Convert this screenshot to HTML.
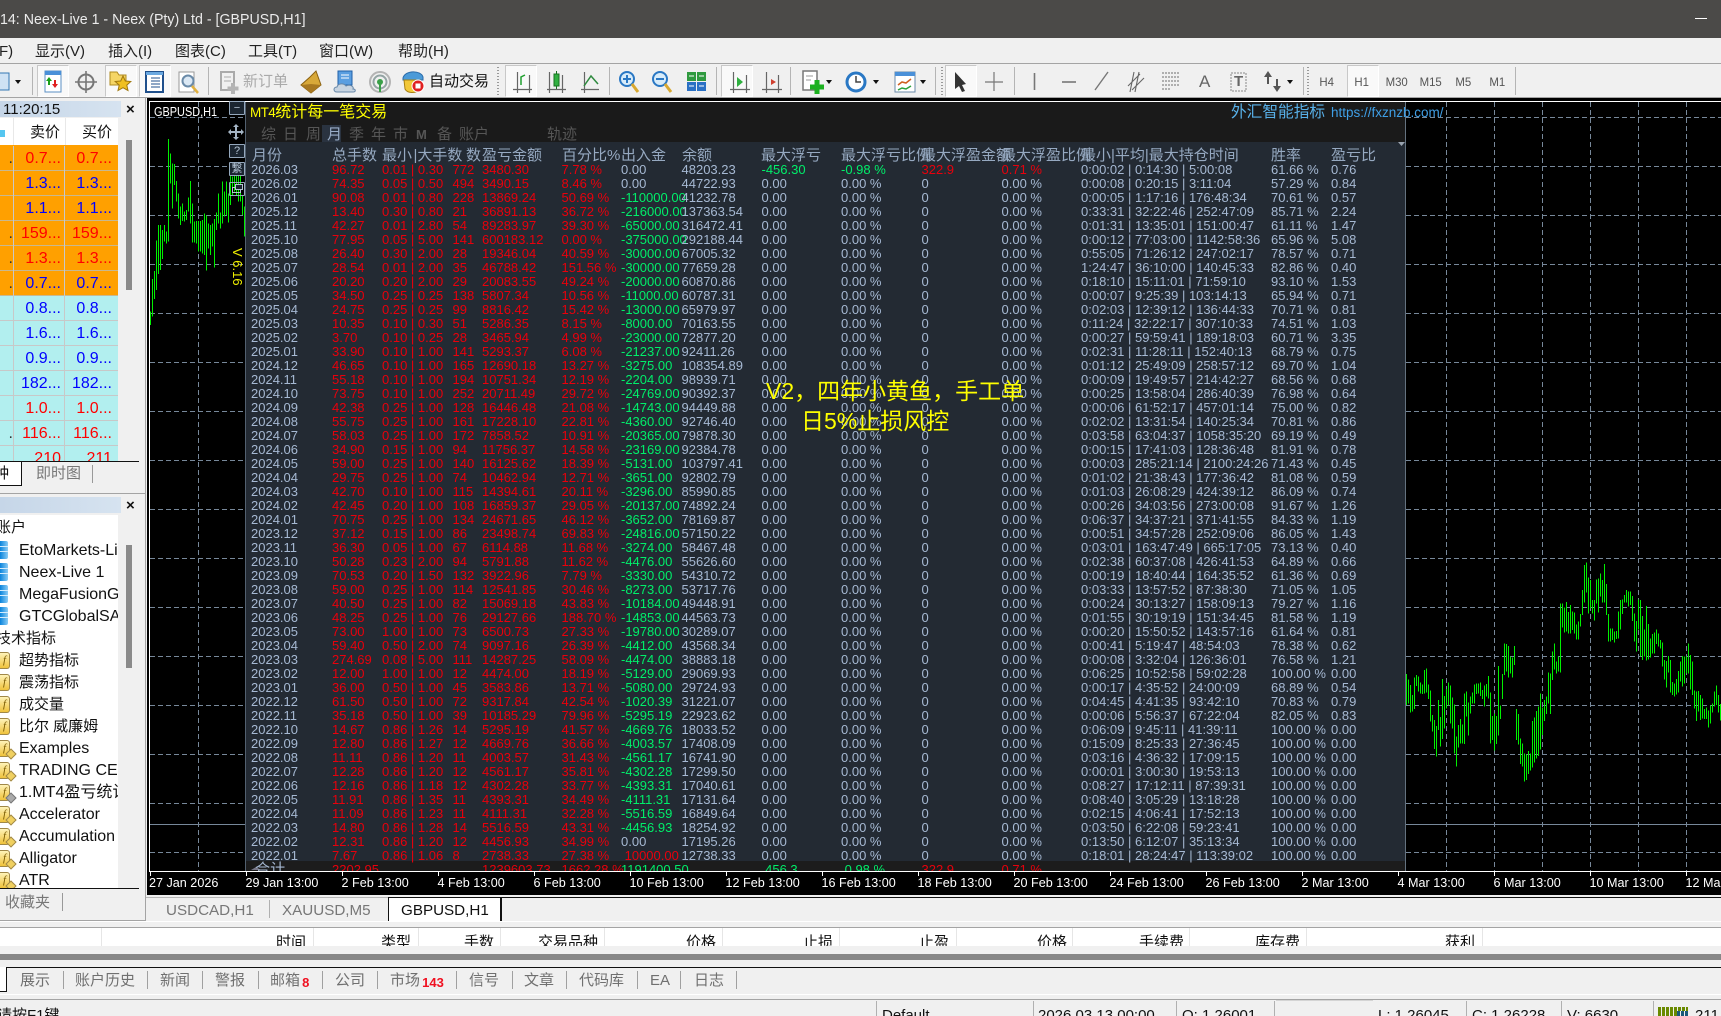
<!DOCTYPE html>
<html><head><meta charset="utf-8"><title>MT4</title>
<style>
html,body{margin:0;padding:0;width:1721px;height:1016px;overflow:hidden;background:#f0f0f0}
body{position:relative;font-family:"Liberation Sans","Noto Sans CJK SC",sans-serif;color:#222}
.a{position:absolute;white-space:nowrap}
svg{position:absolute;left:0;top:0}
#title{left:0;top:0;width:1721px;height:38px;background:#4b4a48}
.m{top:42px;font-size:15px;line-height:20px;color:#222}
.box{position:absolute;background:#f0f0f0}
.tb{top:72px;font-size:15px;line-height:20px}
.tf{top:73px;font-size:12px;line-height:18px;color:#555;transform:scaleX(.95);transform-origin:center}
.row{position:absolute;left:0;width:118px;height:24px}
.row b{position:absolute;top:1px;font-weight:normal;font-size:16px;line-height:24px;text-align:right}
.row b:nth-child(1){left:0;width:13px;color:#333}
.row b:nth-child(2){left:14px;width:47px}
.row b:nth-child(3){left:65px;width:47px}
.r{color:#f00}.u{color:#00f}
.row i{position:absolute;top:0;width:1px;height:25px;background:#c8c8c8}
.n{position:absolute;left:19px;font-size:16px;line-height:22px;height:22px;color:#111;white-space:nowrap;margin-top:1px}
.cn{font-size:15px}
.sv{position:absolute;left:0;width:8px;height:18px;margin-top:-1px;background:linear-gradient(90deg,#0a84dc,#8accf6);border-radius:0 2px 2px 0}
.sv:after{content:"";position:absolute;left:0;top:5px;width:8px;height:1px;background:#d4ecfc;box-shadow:0 5px 0 #d4ecfc}
.fi{position:absolute;left:0;width:9px;height:15px;background:linear-gradient(#fff3b8,#efc23c);border:1px solid #a08848;border-left:0;border-radius:0 3px 3px 0;font:italic 11px/15px "Liberation Serif",serif;color:#7a5a00;text-align:center;overflow:hidden;box-sizing:content-box}
.dm{position:absolute;left:7px;width:6px;height:6px;background:#f0d060;border:1px solid #a08848;transform:rotate(45deg)}
#grid{position:absolute;left:0;top:163px;width:1405px;height:708px;overflow:hidden;font-size:13px;line-height:14px;color:#a6b9d3}
#grid p{position:relative;margin:0;height:14px;width:1405px}
#grid i{position:absolute;top:0;font-style:normal;white-space:nowrap}
#grid i:nth-child(1){left:251px}
#grid i:nth-child(2){left:332px;color:#e8000c}
#grid i:nth-child(3){left:382px;color:#e8000c}
#grid i:nth-child(4){left:452.5px;color:#e8000c}
#grid i:nth-child(5){left:482px;color:#e8000c}
#grid i:nth-child(6){left:561.5px;color:#e8000c}
#grid i:nth-child(7){left:621px;color:#00ee6a}
#grid i:nth-child(8){left:681.5px}
#grid i:nth-child(9){left:761.5px}
#grid i:nth-child(10){left:841px}
#grid i:nth-child(11){left:921.5px}
#grid i:nth-child(12){left:1001.5px}
#grid i:nth-child(13){left:1081px}
#grid i:nth-child(14){left:1271px}
#grid i:nth-child(15){left:1331px}
#grid i.g{color:#00ee6a}
#grid i.d{color:#e8000c}
#grid i.s{color:#a6b9d3}
.h{top:146px;font-size:15px;line-height:20px;color:#96a9c1}
.t2{top:126px;font-size:15px;line-height:18px;color:#565656}
.tl{top:875px;font-size:12.6px;line-height:16px;color:#fff}
.tk{position:absolute;top:872px;width:1px;height:4px;background:#fff}
.ctab{top:897px;font-size:15.2px;line-height:28px;color:#777}
.th{position:absolute;top:5px;font-size:15px;line-height:20px;color:#111;transform:translateX(-100%);white-space:nowrap}
.thb{position:absolute;top:0;width:1px;height:18px;background:#e6e6e6}
.bt{top:971px;font-size:15px;line-height:20px;color:#707070}
.bs{position:absolute;top:971px;width:1px;height:18px;background:#a0a0a0}
.red{color:#f01020;font-weight:bold;font-size:13px}
.st{top:1006px;font-size:15px;line-height:20px;color:#111}
.ss{position:absolute;top:1001px;width:1px;height:15px;background:#b0b0b0}
.sep{position:absolute;top:67px;width:1px;height:28px;background:#b4b4b4}
.pr{position:absolute;top:65px;height:30px;background:#f9f9f9;border:1px solid #c8c8c8;border-right-color:#fff;border-bottom-color:#fff;box-sizing:content-box}
.hd{position:absolute;left:0;height:16px;background:linear-gradient(90deg,#c6d6e8,#d6e3f0);width:121px}
.xx{position:absolute;left:126px;font-size:15px;line-height:16px;color:#111;font-weight:bold}
.ctrl{position:absolute;left:229px;width:14px;height:12px;background:#1b2530;border:1px solid #95a8bd;border-radius:1px;color:#b4c4d4;font-size:11px;line-height:12px;text-align:center}
</style></head><body>
<div class="a" id="title"></div>
<div class="a" style="left:0;top:10px;font-size:15px;line-height:20px;color:#ececec;transform:scaleX(.947);transform-origin:left">14: Neex-Live 1 - Neex (Pty) Ltd - [GBPUSD,H1]</div>
<div class="a" style="left:1695px;top:18px;width:12px;height:1px;background:#fff"></div>
<div class="box" style="left:0;top:38px;width:1721px;height:25px"></div>
<div class="a m" style="left:-1px">F)</div>
<div class="a m" style="left:35px">显示(V)</div>
<div class="a m" style="left:108px">插入(I)</div>
<div class="a m" style="left:175px">图表(C)</div>
<div class="a m" style="left:248px">工具(T)</div>
<div class="a m" style="left:319px">窗口(W)</div>
<div class="a m" style="left:398px">帮助(H)</div>
<div class="a" style="left:0;top:63px;width:1721px;height:1px;background:#a4a4a4"></div>
<div class="a" style="left:0;top:97px;width:1721px;height:1px;background:#a4a4a4"></div>
<div class="pr" style="left:37px;width:30px"></div>
<div class="pr" style="left:105px;width:30px"></div>
<div class="pr" style="left:139px;width:30px"></div>
<div class="pr" style="left:505px;width:30px"></div>
<div class="pr" style="left:721px;width:30px"></div>
<div class="pr" style="left:945px;width:30px"></div>
<div class="pr" style="left:1347px;width:30px"></div>
<div class="sep" style="left:32px"></div><div class="sep" style="left:208px"></div><div class="sep" style="left:609px"></div><div class="sep" style="left:716px"></div><div class="sep" style="left:790px"></div><div class="sep" style="left:935px"></div><div class="sep" style="left:1014px"></div><div class="sep" style="left:1303px"></div><div class="sep" style="left:1515px"></div><div class="sep" style="left:497px;width:2px;background:repeating-linear-gradient(#999 0 1px,transparent 1px 3px)"></div><div class="sep" style="left:941px;width:2px;background:repeating-linear-gradient(#999 0 1px,transparent 1px 3px)"></div><div class="sep" style="left:1307px;width:2px;background:repeating-linear-gradient(#999 0 1px,transparent 1px 3px)"></div>
<div class="a tb" style="left:243px;color:#aaa">新订单</div>
<div class="a tb" style="left:429px;color:#111">自动交易</div>
<div class="a tf" style="left:1319px">H4</div><div class="a tf" style="left:1354px">H1</div><div class="a tf" style="left:1385px">M30</div><div class="a tf" style="left:1419px">M15</div><div class="a tf" style="left:1455px">M5</div><div class="a tf" style="left:1489px">M1</div>
<svg width="1721" height="98" viewBox="0 0 1721 98" fill="none">
<rect x="-6" y="73" width="15" height="17" fill="#cfe2f4" stroke="#3478b4"/><path d="M15 80l6 0-3 4z" fill="#111"/>
<rect x="45" y="71" width="16" height="21" fill="#fff" stroke="#5a8fc4"/><rect x="45" y="71" width="16" height="4" fill="#4a90d8"/><path d="M49 77l-3 4h2v4h2v-4h2z" fill="#1aa01a"/><path d="M55 88l3-4h-2v-4h-2v4h-2z" fill="#e02020"/>
<circle cx="86" cy="82" r="7.5" stroke="#777" stroke-width="2"/><path d="M86 71v22M75 82h22" stroke="#777" stroke-width="1.6"/>
<path d="M110 72h7l2 3h7v10h-16z" fill="#f5d565" stroke="#b08a20"/><path d="M123 76l2.3 5 5.5.5-4 3.6 1.2 5.4-5-2.8-5 2.8 1.2-5.4-4-3.6 5.5-.5z" fill="#f0c020" stroke="#a07810"/>
<rect x="146" y="72" width="17" height="20" fill="#fff" stroke="#20508c" stroke-width="2"/><path d="M146 72h17v3h-17z" fill="#6aa8e0"/><path d="M151 78h9M151 81h9M151 84h9M151 87h9" stroke="#20508c"/>
<rect x="179" y="72" width="15" height="20" fill="#fff" stroke="#999"/><circle cx="188" cy="81" r="5.5" stroke="#6a8aa8" stroke-width="2" fill="#dbe8f4"/><path d="M192 86l6 7" stroke="#e0b040" stroke-width="2.5"/>
<rect x="221" y="72" width="13" height="18" fill="#f0f0f0" stroke="#aaa" stroke-width="2"/><path d="M224 77h7M224 81h7" stroke="#aaa"/><path d="M233 83v11M227.5 88.5h11" stroke="#b4b4b4" stroke-width="4"/>
<path d="M316 71l5 14-10 8-10-8 9-8z" fill="#d8a838" stroke="#8a6010"/><path d="M301 85l10-1 10 1-10 8z" fill="#a87820"/>
<rect x="338" y="71" width="14" height="14" fill="#5a9ee0" stroke="#2060a8"/><path d="M341 75h8M341 78h8" stroke="#fff"/><path d="M337 92c-4 0-4-5 0-5 1-4 7-4 9-1 5-2 8 1 7 3 3 0 3 3 0 3z" fill="#c8d4e0" stroke="#6888a8"/>
<circle cx="380" cy="82" r="10" stroke="#b4b4b4" stroke-width="2"/><circle cx="380" cy="82" r="6.5" stroke="#94a4a4" stroke-width="2"/><circle cx="380" cy="82" r="3" fill="#3aa048"/><path d="M380 82v10" stroke="#3aa048" stroke-width="2"/>
<path d="M403 78c2-8 18-8 20-1v3h-20z" fill="#4a9ad8" stroke="#2a6aa8"/><path d="M404 80h16l-1 10c-4 4-12 3-14-1z" fill="#f2c838" stroke="#a88010"/><circle cx="418" cy="86" r="6" fill="#e02020" stroke="#fff" stroke-width="1"/><rect x="415.5" y="83.5" width="5" height="5" fill="#fff"/>
<g stroke="#666" stroke-width="1.2"><path d="M517.500 72v21M529.500 75v18M513 89.500h19"/><path d="M549.500 72v21M562.500 75v18M547 89.500h19"/><path d="M584.500 72v21M581 89.500h18"/><path d="M733.500 72v21M746.500 75v18M730 89.500h20"/><path d="M766.500 72v21M778.500 75v18M762 89.500h20"/></g>
<path d="M521 85v-8l4-2" stroke="#20a030" stroke-width="1.5"/><rect x="554" y="74" width="5" height="12" fill="#30b040" stroke="#187020"/><path d="M556.5 71v3M556.5 86v3" stroke="#187020"/><path d="M584 86l7-10 7 8" stroke="#2f8a3f" stroke-width="1.5"/>
<circle cx="627" cy="79" r="7" fill="#d8ecfa" stroke="#2a78c4" stroke-width="2"/><path d="M623 79h8M627 75v8" stroke="#2a78c4" stroke-width="2"/><path d="M632 84l6 8" stroke="#d8a830" stroke-width="3"/>
<circle cx="660" cy="79" r="7" fill="#d8ecfa" stroke="#2a78c4" stroke-width="2"/><path d="M656 79h8" stroke="#2a78c4" stroke-width="2"/><path d="M665 84l6 8" stroke="#d8a830" stroke-width="3"/>
<rect x="687" y="72" width="9" height="9" fill="#2f9a3f"/><rect x="697" y="72" width="9" height="9" fill="#2f9a3f"/><rect x="687" y="82" width="9" height="9" fill="#2a70c4"/><rect x="697" y="82" width="9" height="9" fill="#2a70c4"/><path d="M689 76h5M699 76h5M689 86h5M699 86h5" stroke="#fff"/>
<path d="M737 77l6 5-6 5z" fill="#30b040"/><path d="M771 79l5 3-5 3z" fill="#d04030"/>
<rect x="803" y="71" width="14" height="19" fill="#fff" stroke="#777" stroke-width="1.5"/><path d="M806 76h7M806 80h5" stroke="#999"/><path d="M817 80v14M810 87h14" stroke="#1cb020" stroke-width="5"/><path d="M826 80l6 0-3 4z" fill="#111"/>
<circle cx="856" cy="82" r="9" fill="#fff" stroke="#2a78c4" stroke-width="3"/><path d="M856 76v6h5" stroke="#444" stroke-width="1.5"/><path d="M873 80l6 0-3 4z" fill="#111"/>
<rect x="895" y="72" width="20" height="20" fill="#fff" stroke="#6a8aa8"/><rect x="895" y="72" width="20" height="4" fill="#4a90d8"/><path d="M898 85l4-3 4 1 5-4" stroke="#d06020" stroke-width="1.5"/><path d="M898 90l4-2 4 1 5-3" stroke="#2aa03a" stroke-width="1.5"/><path d="M920 80l6 0-3 4z" fill="#111"/>
<path d="M955 72l0 17 4-3 3 6 3-1-3-6 4-1z" fill="#333"/>
<path d="M994 72v19M985 82h18" stroke="#777" stroke-width="1.2"/><path d="M1034.5 73v17" stroke="#777" stroke-width="1.6"/><path d="M1062 82h14" stroke="#777" stroke-width="1.6"/><path d="M1095 90l13-18" stroke="#777" stroke-width="1.4"/>
<path d="M1128 86l12-12M1132 90l12-12M1134 72l-4 20M1139 72l-4 20" stroke="#666" stroke-width="1.1"/>
<path d="M1162 73h17M1162 77h17M1162 81h17M1162 85h17M1162 89h8" stroke="#888" stroke-width="1.2" stroke-dasharray="2 1"/>
<rect x="1231" y="73" width="15" height="18" stroke="#888" stroke-dasharray="2 1"/>
<path d="M1268 71l4 6h-8zM1277 92l4-6h-8z" fill="#555"/><path d="M1268 77v7M1277 79v7" stroke="#555" stroke-width="2"/><path d="M1287 80l6 0-3 4z" fill="#111"/>
</svg>
<div class="a" style="left:1199px;top:71px;font-size:17px;line-height:22px;color:#666">A</div>
<div class="a" style="left:1234px;top:72px;font-size:15px;line-height:20px;color:#666;font-weight:bold">T</div>

<div class="box" style="left:0;top:98px;width:145px;height:822px;border-right:1px solid #a4a4a4;border-bottom:1px solid #a4a4a4"></div>
<div class="hd" style="top:101px"></div>
<div class="a" style="left:3px;top:101px;font-size:15px;line-height:18px;color:#111">11:20:15</div>
<div class="xx" style="top:102px">×</div>
<div class="a" style="left:0;top:118px;width:118px;height:27px;background:#fff"></div>
<div class="a" style="left:13px;top:118px;width:1px;height:27px;background:#e8e8e8"></div><div class="a" style="left:65px;top:118px;width:1px;height:27px;background:#e8e8e8"></div>
<div class="a" style="left:0;top:130px;width:5px;height:7px;background:#55c6f0"></div>
<div class="a" style="left:30px;top:123px;font-size:15px;line-height:20px;color:#111">卖价</div>
<div class="a" style="left:82px;top:123px;font-size:15px;line-height:20px;color:#111">买价</div>
<div id="mw" class="a" style="left:0;top:145px;width:118px;height:316px;overflow:hidden;background:#b2efef">
<div class="a" style="left:0;top:0;width:118px;height:150px;background:#ffa000"></div>
<div class="row" style="top:1px;border-bottom:1px solid #c8b890"><b>.</b><b class="r">0.7...</b><b class="r">0.7...</b><i style="left:13px"></i><i style="left:64px"></i></div>
<div class="row" style="top:26px;border-bottom:1px solid #c8b890"><b></b><b class="u">1.3...</b><b class="u">1.3...</b><i style="left:13px"></i><i style="left:64px"></i></div>
<div class="row" style="top:51px;border-bottom:1px solid #c8b890"><b></b><b class="u">1.1...</b><b class="u">1.1...</b><i style="left:13px"></i><i style="left:64px"></i></div>
<div class="row" style="top:76px;border-bottom:1px solid #c8b890"><b>.</b><b class="r">159...</b><b class="r">159...</b><i style="left:13px"></i><i style="left:64px"></i></div>
<div class="row" style="top:101px;border-bottom:1px solid #c8b890"><b>.</b><b class="r">1.3...</b><b class="r">1.3...</b><i style="left:13px"></i><i style="left:64px"></i></div>
<div class="row" style="top:126px;border-bottom:1px solid #c8b890"><b>.</b><b class="u">0.7...</b><b class="u">0.7...</b><i style="left:13px"></i><i style="left:64px"></i></div>
<div class="row" style="top:151px;border-bottom:1px solid #c8c8c8"><b></b><b class="u">0.8...</b><b class="u">0.8...</b><i style="left:13px"></i><i style="left:64px"></i></div>
<div class="row" style="top:176px;border-bottom:1px solid #c8c8c8"><b></b><b class="u">1.6...</b><b class="u">1.6...</b><i style="left:13px"></i><i style="left:64px"></i></div>
<div class="row" style="top:201px;border-bottom:1px solid #c8c8c8"><b></b><b class="u">0.9...</b><b class="u">0.9...</b><i style="left:13px"></i><i style="left:64px"></i></div>
<div class="row" style="top:226px;border-bottom:1px solid #c8c8c8"><b></b><b class="u">182...</b><b class="u">182...</b><i style="left:13px"></i><i style="left:64px"></i></div>
<div class="row" style="top:251px;border-bottom:1px solid #c8c8c8"><b></b><b class="r">1.0...</b><b class="r">1.0...</b><i style="left:13px"></i><i style="left:64px"></i></div>
<div class="row" style="top:276px;border-bottom:1px solid #c8c8c8"><b>.</b><b class="r">116...</b><b class="r">116...</b><i style="left:13px"></i><i style="left:64px"></i></div>
<div class="row" style="top:301px"><b></b><b class="r">210</b><b class="r">211</b><i style="left:13px"></i><i style="left:64px"></i></div>
</div>
<div class="a" style="left:126px;top:140px;width:6px;height:150px;background:#8a8a8a"></div>
<div class="a" style="left:0;top:461px;width:139px;height:1px;background:#111"></div>
<div class="a" style="left:0;top:461px;width:21px;height:23px;background:#fff;border-right:1px solid #111;border-bottom:1px solid #111;border-top:1px solid #111"></div>
<div class="a" style="left:-6px;top:464px;font-size:15px;line-height:20px;color:#111">种</div>
<div class="a" style="left:36px;top:464px;font-size:15px;line-height:20px;color:#777">即时图</div>
<div class="a" style="left:92px;top:465px;width:1px;height:18px;background:#999"></div>
<div class="a" style="left:0;top:493px;width:145px;height:1px;background:#a4a4a4"></div>
<div class="hd" style="top:497px"></div>
<div class="xx" style="top:498px">×</div>
<div class="a" style="left:0;top:515px;width:118px;height:373px;overflow:hidden;background:#fff" id="nav">
<div class="n cn" style="left:-4px;top:1px">账户</div>
<div class="sv" style="top:27px"></div><div class="n" style="top:24px">EtoMarkets-Live</div>
<div class="sv" style="top:49px"></div><div class="n" style="top:46px">Neex-Live 1</div>
<div class="sv" style="top:71px"></div><div class="n" style="top:68px">MegaFusionGlobal</div>
<div class="sv" style="top:93px"></div><div class="n" style="top:90px">GTCGlobalSA-Live</div>
<div class="n cn" style="left:-4px;top:112px">技术指标</div>
<div class="fi" style="top:137px">f</div><div class="n cn" style="top:134px">超势指标</div>
<div class="fi" style="top:159px">f</div><div class="n cn" style="top:156px">震荡指标</div>
<div class="fi" style="top:181px">f</div><div class="n cn" style="top:178px">成交量</div>
<div class="fi" style="top:203px">f</div><div class="n cn" style="top:200px">比尔 威廉姆</div>
<div class="fi" style="top:225px">f</div><div class="dm" style="top:235px"></div><div class="n" style="top:222px">Examples</div>
<div class="fi" style="top:247px">f</div><div class="dm" style="top:257px"></div><div class="n" style="top:244px">TRADING CENTRAL</div>
<div class="fi" style="top:269px">f</div><div class="dm" style="top:279px;background:#aaa;border-color:#777"></div><div class="n" style="top:266px">1.MT4盈亏统计</div>
<div class="fi" style="top:291px">f</div><div class="dm" style="top:301px"></div><div class="n" style="top:288px">Accelerator</div>
<div class="fi" style="top:313px">f</div><div class="dm" style="top:323px"></div><div class="n" style="top:310px">Accumulation</div>
<div class="fi" style="top:335px">f</div><div class="dm" style="top:345px"></div><div class="n" style="top:332px">Alligator</div>
<div class="fi" style="top:357px">f</div><div class="dm" style="top:367px"></div><div class="n" style="top:354px">ATR</div>
</div>
<div class="a" style="left:126px;top:545px;width:6px;height:123px;background:#8a8a8a"></div>
<div class="a" style="left:0;top:888px;width:139px;height:1px;background:#111"></div>
<div class="a" style="left:5px;top:893px;font-size:15px;line-height:20px;color:#777">收藏夹</div>
<div class="a" style="left:62px;top:893px;width:1px;height:18px;background:#999"></div>

<div class="a" style="left:147px;top:98px;width:1574px;height:797px;background:#000"></div>
<svg width="1721" height="1016" viewBox="0 0 1721 1016" fill="none">
<path d="M150 117.5H1721M150 166.5H1721M150 215.5H1721M150 264.5H1721M150 313.5H1721M150 362.5H1721M150 411.5H1721M150 460.5H1721M150 509.5H1721M150 558.5H1721M150 607.5H1721M150 656.5H1721M150 705.5H1721M150 754.5H1721M150 803.5H1721M150 852.5H1721M198.5 102V871M1446.5 102V871M1494.5 102V871M1542.5 102V871M1590.5 102V871M1638.5 102V871M1686.5 102V871" stroke="#77889a" stroke-dasharray="5 3"/>
<path d="M150 824.5H1721" stroke="#77889a"/>
<g transform="translate(0.17,95) scale(.33333)" stroke="#00f000" stroke-width="3" shape-rendering="crispEdges">
<path d="M451 650V690M457 552V665M463 528V612M469 437V585M475 390V537M481 390V525M487 405V492M493 390V440M499 410V445M505 132V440M511 175V265M517 205V340M523 207V270M529 258V320M535 295V370M541 335V390M547 325V378M553 350V380M559 345V375M565 308V350M571 258V385M577 325V442M583 380V442M589 378V445M595 378V470M601 378V470M607 375V475M613 355V480M619 362V527M625 385V460M631 390V480M637 385V455M643 372V518M649 352V405M655 295V385M661 352V400M667 260V385M673 290V365M679 260V360M685 295V382M691 240V330M697 245V300M703 240V290M709 240V300M715 240V320M721 240V320M727 300V360M733 335V425"/>
</g>
<g transform="translate(1400.17,540) scale(.33333)" stroke="#00f000" stroke-width="3" shape-rendering="crispEdges">
<path d="M19 402V495M25 418V490M31 435V518M37 465V515M43 413V507M49 405V438M55 410V455M61 427V460M67 433V462M73 390V460M79 385V458M85 433V477M91 452V545M97 525V575M103 540V627M109 558V650M115 480V570M121 531V620M127 417V597M133 468V565M139 447V505M145 427V497M151 437V550M157 472V565M163 493V640M169 590V680M175 555V623M181 537V610M187 553V610M193 460V612M199 454V530M205 487V587M211 470V520M217 457V490M223 433V490M229 431V462M235 430V460M241 428V468M247 450V477M253 437V500M259 432V470M265 408V475M271 457V610M277 528V600M283 520V632M289 528V612M295 378V587M301 497V537M307 402V477M313 310V405M319 312V395M325 318V412M331 350V400M337 352V413M343 318V375M349 507V600M355 522V613M361 595V672M367 610V680M373 640V725M379 643V720M385 633V702M391 640V692M397 543V683M403 533V668M409 513V655M415 500V648M421 460V628M427 502V585M433 480V543M439 470V522M445 397V490M451 400V522M457 335V420M463 310V388M469 365V400M475 350V395M481 190V398M487 190V263M493 203V277M499 186V275M505 216V280M511 195V280M517 215V270M523 218V280M529 253V298M535 245V298M541 222V260M547 150V225M553 75V188M559 67V158M565 113V220M571 120V205M577 180V220M583 180V242M589 118V190M595 115V218M601 100V170M607 120V188M613 72V188M619 132V225M625 222V305M631 265V305M637 265V300M643 275V308M649 273V297M655 215V295M661 180V268M667 178V222M673 165V187M679 150V187M685 155V200M691 155V195M697 168V243M703 220V305M709 243V335M715 178V268M721 180V350M727 228V360M733 268V350M739 198V362M745 252V358M751 295V352M757 282V340M763 278V340M769 268V312M775 280V320M781 300V325M787 308V380M793 360V418M799 363V443M805 348V398M811 360V458M817 426V465M823 430V470M829 417V463M835 393V458M841 365V425M847 348V440M853 350V430M859 350V400M865 310V400M871 345V448M877 365V465M883 452V505M889 455V543M895 453V515M901 465V540M907 475V535M913 507V537M919 502V537M925 512V563M931 497V550M937 490V517M943 455V500M949 437V495M955 465V517M961 492V542"/>
</g>
<path d="M149.5 101V872M149 101.5H1721M149 871.5H1721" stroke="#fff"/>
</svg>
<div class="tk" style="left:150px"></div><div class="tk" style="left:246px"></div><div class="tk" style="left:342px"></div><div class="tk" style="left:438px"></div><div class="tk" style="left:534px"></div><div class="tk" style="left:630px"></div><div class="tk" style="left:726px"></div><div class="tk" style="left:822px"></div><div class="tk" style="left:918px"></div><div class="tk" style="left:1014px"></div><div class="tk" style="left:1110px"></div><div class="tk" style="left:1206px"></div><div class="tk" style="left:1302px"></div><div class="tk" style="left:1398px"></div><div class="tk" style="left:1494px"></div><div class="tk" style="left:1590px"></div><div class="tk" style="left:1686px"></div>
<div class="a tl" style="left:149px">27 Jan 2026</div><div class="a tl" style="left:245.5px">29 Jan 13:00</div><div class="a tl" style="left:341.5px">2 Feb 13:00</div><div class="a tl" style="left:437.5px">4 Feb 13:00</div><div class="a tl" style="left:533.5px">6 Feb 13:00</div><div class="a tl" style="left:629.5px">10 Feb 13:00</div><div class="a tl" style="left:725.5px">12 Feb 13:00</div><div class="a tl" style="left:821.5px">16 Feb 13:00</div><div class="a tl" style="left:917.5px">18 Feb 13:00</div><div class="a tl" style="left:1013.5px">20 Feb 13:00</div><div class="a tl" style="left:1109.5px">24 Feb 13:00</div><div class="a tl" style="left:1205.5px">26 Feb 13:00</div><div class="a tl" style="left:1301.5px">2 Mar 13:00</div><div class="a tl" style="left:1397.5px">4 Mar 13:00</div><div class="a tl" style="left:1493.5px">6 Mar 13:00</div><div class="a tl" style="left:1589.5px">10 Mar 13:00</div><div class="a tl" style="left:1685.5px">12 Mar 13:00</div>
<div class="a" style="left:154px;top:103px;font-size:13px;line-height:18px;color:#fff;transform:scaleX(.84);transform-origin:left">GBPUSD,H1</div>
<div class="a" style="left:244px;top:248px;font-size:13px;line-height:14px;color:#f0f000;transform:rotate(90deg);transform-origin:0 0">V 6.16</div>

<div class="a" style="left:245px;top:102px;width:1160px;height:40px;background:#1a1a1a"></div>
<div class="a" style="left:245px;top:142px;width:1160px;height:719px;background:#232a33"></div>
<div class="a" style="left:245px;top:861px;width:1160px;height:10px;background:#1c1c1c"></div>
<div class="a" style="left:245px;top:102px;width:1px;height:769px;background:#52606f"></div>
<div class="a" style="left:1405px;top:102px;width:1px;height:769px;background:#64727f"></div>
<div class="a" style="left:250px;top:103px;font-size:16px;line-height:20px;color:#ff0"><span style="font-size:13.5px;letter-spacing:-.6px">MT4</span>统计每一笔交易</div>
<div class="a" style="left:1231px;top:103px;font-size:15.7px;line-height:20px;color:#58b0e8">外汇智能指标</div>
<div class="a" style="left:1331px;top:103px;font-size:13.5px;line-height:20px;color:#3f9fe6">https://fxznzb.com/</div>
<div class="a" style="left:322px;top:125px;width:19px;height:17px;background:#2a3340"></div>
<div class="a t2" style="left:261px">综</div><div class="a t2" style="left:283px">日</div><div class="a t2" style="left:306px">周</div><div class="a t2" style="left:327px;color:#9aaec8">月</div><div class="a t2" style="left:349px">季</div><div class="a t2" style="left:371px">年</div><div class="a t2" style="left:393px">巿</div><div class="a t2" style="left:416px;font-weight:bold;font-size:13px">M</div><div class="a t2" style="left:437px">备</div><div class="a t2" style="left:459px">账户</div><div class="a t2" style="left:547px">轨迹</div>
<div class="a h" style="left:252px">月份</div><div class="a h" style="left:332px">总手数</div><div class="a h" style="left:382px">最小<span style="margin-left:1.5px">|</span>大手数</div><div class="a h" style="left:466px">数</div><div class="a h" style="left:482px">盈亏金额</div><div class="a h" style="left:562px">百分比%</div><div class="a h" style="left:621px">出入金</div><div class="a h" style="left:682px">余额</div><div class="a h" style="left:761px">最大浮亏</div><div class="a h" style="left:841px">最大浮亏比例</div><div class="a h" style="left:921px">最大浮盈金额</div><div class="a h" style="left:1001px">最大浮盈比例</div><div class="a h" style="left:1081px">最小|平均|最大持仓时间</div><div class="a h" style="left:1271px">胜率</div><div class="a h" style="left:1331px">盈亏比</div>
<svg width="1721" height="1016" viewBox="0 0 1721 1016"><path d="M1398 142h7l-3.5 4z" fill="#9aa4b0"/><path d="M251 870l5-3 5 3z" fill="#778"/></svg>
<div id="grid">
<p><i>2026.03</i><i>96.72</i><i>0.01 | 0.30</i><i>772</i><i>3480.30</i><i>7.78 %</i><i class="s">0.00</i><i>48203.23</i><i class="g">-456.30</i><i class="g">-0.98 %</i><i class="d">322.9</i><i class="d">0.71 %</i><i>0:00:02 | 0:14:30 | 5:00:08</i><i>61.66 %</i><i>0.76</i></p>
<p><i>2026.02</i><i>74.35</i><i>0.05 | 0.50</i><i>494</i><i>3490.15</i><i>8.46 %</i><i class="s">0.00</i><i>44722.93</i><i>0.00</i><i>0.00 %</i><i>0</i><i>0.00 %</i><i>0:00:08 | 0:20:15 | 3:11:04</i><i>57.29 %</i><i>0.84</i></p>
<p><i>2026.01</i><i>90.08</i><i>0.01 | 0.80</i><i>228</i><i>13869.24</i><i>50.69 %</i><i>-110000.00</i><i>41232.78</i><i>0.00</i><i>0.00 %</i><i>0</i><i>0.00 %</i><i>0:00:05 | 1:17:16 | 176:48:34</i><i>70.61 %</i><i>0.57</i></p>
<p><i>2025.12</i><i>13.40</i><i>0.30 | 0.80</i><i>21</i><i>36891.13</i><i>36.72 %</i><i>-216000.00</i><i>137363.54</i><i>0.00</i><i>0.00 %</i><i>0</i><i>0.00 %</i><i>0:33:31 | 32:22:46 | 252:47:09</i><i>85.71 %</i><i>2.24</i></p>
<p><i>2025.11</i><i>42.27</i><i>0.01 | 2.80</i><i>54</i><i>89283.97</i><i>39.30 %</i><i>-65000.00</i><i>316472.41</i><i>0.00</i><i>0.00 %</i><i>0</i><i>0.00 %</i><i>0:01:31 | 13:35:01 | 151:00:47</i><i>61.11 %</i><i>1.47</i></p>
<p><i>2025.10</i><i>77.95</i><i>0.05 | 5.00</i><i>141</i><i>600183.12</i><i>0.00 %</i><i>-375000.00</i><i>292188.44</i><i>0.00</i><i>0.00 %</i><i>0</i><i>0.00 %</i><i>0:00:12 | 77:03:00 | 1142:58:36</i><i>65.96 %</i><i>5.08</i></p>
<p><i>2025.08</i><i>26.40</i><i>0.30 | 2.00</i><i>28</i><i>19346.04</i><i>40.59 %</i><i>-30000.00</i><i>67005.32</i><i>0.00</i><i>0.00 %</i><i>0</i><i>0.00 %</i><i>0:55:05 | 71:26:12 | 247:02:17</i><i>78.57 %</i><i>0.71</i></p>
<p><i>2025.07</i><i>28.54</i><i>0.01 | 2.00</i><i>35</i><i>46788.42</i><i>151.56 %</i><i>-30000.00</i><i>77659.28</i><i>0.00</i><i>0.00 %</i><i>0</i><i>0.00 %</i><i>1:24:47 | 36:10:00 | 140:45:33</i><i>82.86 %</i><i>0.40</i></p>
<p><i>2025.06</i><i>20.20</i><i>0.20 | 2.00</i><i>29</i><i>20083.55</i><i>49.24 %</i><i>-20000.00</i><i>60870.86</i><i>0.00</i><i>0.00 %</i><i>0</i><i>0.00 %</i><i>0:18:10 | 15:11:01 | 71:59:10</i><i>93.10 %</i><i>1.53</i></p>
<p><i>2025.05</i><i>34.50</i><i>0.25 | 0.25</i><i>138</i><i>5807.34</i><i>10.56 %</i><i>-11000.00</i><i>60787.31</i><i>0.00</i><i>0.00 %</i><i>0</i><i>0.00 %</i><i>0:00:07 | 9:25:39 | 103:14:13</i><i>65.94 %</i><i>0.71</i></p>
<p><i>2025.04</i><i>24.75</i><i>0.25 | 0.25</i><i>99</i><i>8816.42</i><i>15.42 %</i><i>-13000.00</i><i>65979.97</i><i>0.00</i><i>0.00 %</i><i>0</i><i>0.00 %</i><i>0:02:03 | 12:39:12 | 136:44:33</i><i>70.71 %</i><i>0.81</i></p>
<p><i>2025.03</i><i>10.35</i><i>0.10 | 0.30</i><i>51</i><i>5286.35</i><i>8.15 %</i><i>-8000.00</i><i>70163.55</i><i>0.00</i><i>0.00 %</i><i>0</i><i>0.00 %</i><i>0:11:24 | 32:22:17 | 307:10:33</i><i>74.51 %</i><i>1.03</i></p>
<p><i>2025.02</i><i>3.70</i><i>0.10 | 0.25</i><i>28</i><i>3465.94</i><i>4.99 %</i><i>-23000.00</i><i>72877.20</i><i>0.00</i><i>0.00 %</i><i>0</i><i>0.00 %</i><i>0:00:27 | 59:59:41 | 189:18:03</i><i>60.71 %</i><i>3.35</i></p>
<p><i>2025.01</i><i>33.90</i><i>0.10 | 1.00</i><i>141</i><i>5293.37</i><i>6.08 %</i><i>-21237.00</i><i>92411.26</i><i>0.00</i><i>0.00 %</i><i>0</i><i>0.00 %</i><i>0:02:31 | 11:28:11 | 152:40:13</i><i>68.79 %</i><i>0.75</i></p>
<p><i>2024.12</i><i>46.65</i><i>0.10 | 1.00</i><i>165</i><i>12690.18</i><i>13.27 %</i><i>-3275.00</i><i>108354.89</i><i>0.00</i><i>0.00 %</i><i>0</i><i>0.00 %</i><i>0:01:12 | 25:49:09 | 258:57:12</i><i>69.70 %</i><i>1.04</i></p>
<p><i>2024.11</i><i>55.18</i><i>0.10 | 1.00</i><i>194</i><i>10751.34</i><i>12.19 %</i><i>-2204.00</i><i>98939.71</i><i>0.00</i><i>0.00 %</i><i>0</i><i>0.00 %</i><i>0:00:09 | 19:49:57 | 214:42:27</i><i>68.56 %</i><i>0.68</i></p>
<p><i>2024.10</i><i>73.75</i><i>0.10 | 1.00</i><i>252</i><i>20711.49</i><i>29.72 %</i><i>-24769.00</i><i>90392.37</i><i>0.00</i><i>0.00 %</i><i>0</i><i>0.00 %</i><i>0:00:25 | 13:58:04 | 286:40:39</i><i>76.98 %</i><i>0.64</i></p>
<p><i>2024.09</i><i>42.38</i><i>0.25 | 1.00</i><i>128</i><i>16446.48</i><i>21.08 %</i><i>-14743.00</i><i>94449.88</i><i>0.00</i><i>0.00 %</i><i>0</i><i>0.00 %</i><i>0:00:06 | 61:52:17 | 457:01:14</i><i>75.00 %</i><i>0.82</i></p>
<p><i>2024.08</i><i>55.75</i><i>0.25 | 1.00</i><i>161</i><i>17228.10</i><i>22.81 %</i><i>-4360.00</i><i>92746.40</i><i>0.00</i><i>0.00 %</i><i>0</i><i>0.00 %</i><i>0:02:02 | 13:31:54 | 140:25:34</i><i>70.81 %</i><i>0.86</i></p>
<p><i>2024.07</i><i>58.03</i><i>0.25 | 1.00</i><i>172</i><i>7858.52</i><i>10.91 %</i><i>-20365.00</i><i>79878.30</i><i>0.00</i><i>0.00 %</i><i>0</i><i>0.00 %</i><i>0:03:58 | 63:04:37 | 1058:35:20</i><i>69.19 %</i><i>0.49</i></p>
<p><i>2024.06</i><i>34.90</i><i>0.15 | 1.00</i><i>94</i><i>11756.37</i><i>14.58 %</i><i>-23169.00</i><i>92384.78</i><i>0.00</i><i>0.00 %</i><i>0</i><i>0.00 %</i><i>0:00:15 | 17:41:03 | 128:36:48</i><i>81.91 %</i><i>0.78</i></p>
<p><i>2024.05</i><i>59.00</i><i>0.25 | 1.00</i><i>140</i><i>16125.62</i><i>18.39 %</i><i>-5131.00</i><i>103797.41</i><i>0.00</i><i>0.00 %</i><i>0</i><i>0.00 %</i><i>0:00:03 | 285:21:14 | 2100:24:26</i><i>71.43 %</i><i>0.45</i></p>
<p><i>2024.04</i><i>29.75</i><i>0.25 | 1.00</i><i>74</i><i>10462.94</i><i>12.71 %</i><i>-3651.00</i><i>92802.79</i><i>0.00</i><i>0.00 %</i><i>0</i><i>0.00 %</i><i>0:01:02 | 21:38:43 | 177:36:42</i><i>81.08 %</i><i>0.59</i></p>
<p><i>2024.03</i><i>42.70</i><i>0.10 | 1.00</i><i>115</i><i>14394.61</i><i>20.11 %</i><i>-3296.00</i><i>85990.85</i><i>0.00</i><i>0.00 %</i><i>0</i><i>0.00 %</i><i>0:01:03 | 26:08:29 | 424:39:12</i><i>86.09 %</i><i>0.74</i></p>
<p><i>2024.02</i><i>42.45</i><i>0.20 | 1.00</i><i>108</i><i>16859.37</i><i>29.05 %</i><i>-20137.00</i><i>74892.24</i><i>0.00</i><i>0.00 %</i><i>0</i><i>0.00 %</i><i>0:00:26 | 34:03:56 | 273:00:08</i><i>91.67 %</i><i>1.26</i></p>
<p><i>2024.01</i><i>70.75</i><i>0.25 | 1.00</i><i>134</i><i>24671.65</i><i>46.12 %</i><i>-3652.00</i><i>78169.87</i><i>0.00</i><i>0.00 %</i><i>0</i><i>0.00 %</i><i>0:06:37 | 34:37:21 | 371:41:55</i><i>84.33 %</i><i>1.19</i></p>
<p><i>2023.12</i><i>37.12</i><i>0.15 | 1.00</i><i>86</i><i>23498.74</i><i>69.83 %</i><i>-24816.00</i><i>57150.22</i><i>0.00</i><i>0.00 %</i><i>0</i><i>0.00 %</i><i>0:00:51 | 34:57:28 | 252:09:06</i><i>86.05 %</i><i>1.43</i></p>
<p><i>2023.11</i><i>36.30</i><i>0.05 | 1.00</i><i>67</i><i>6114.88</i><i>11.68 %</i><i>-3274.00</i><i>58467.48</i><i>0.00</i><i>0.00 %</i><i>0</i><i>0.00 %</i><i>0:03:01 | 163:47:49 | 665:17:05</i><i>73.13 %</i><i>0.40</i></p>
<p><i>2023.10</i><i>50.28</i><i>0.23 | 2.00</i><i>94</i><i>5791.88</i><i>11.62 %</i><i>-4476.00</i><i>55626.60</i><i>0.00</i><i>0.00 %</i><i>0</i><i>0.00 %</i><i>0:02:38 | 60:37:08 | 426:41:53</i><i>64.89 %</i><i>0.66</i></p>
<p><i>2023.09</i><i>70.53</i><i>0.20 | 1.50</i><i>132</i><i>3922.96</i><i>7.79 %</i><i>-3330.00</i><i>54310.72</i><i>0.00</i><i>0.00 %</i><i>0</i><i>0.00 %</i><i>0:00:19 | 18:40:44 | 164:35:52</i><i>61.36 %</i><i>0.69</i></p>
<p><i>2023.08</i><i>59.00</i><i>0.25 | 1.00</i><i>114</i><i>12541.85</i><i>30.46 %</i><i>-8273.00</i><i>53717.76</i><i>0.00</i><i>0.00 %</i><i>0</i><i>0.00 %</i><i>0:03:33 | 13:57:52 | 87:38:30</i><i>71.05 %</i><i>1.05</i></p>
<p><i>2023.07</i><i>40.50</i><i>0.25 | 1.00</i><i>82</i><i>15069.18</i><i>43.83 %</i><i>-10184.00</i><i>49448.91</i><i>0.00</i><i>0.00 %</i><i>0</i><i>0.00 %</i><i>0:00:24 | 30:13:27 | 158:09:13</i><i>79.27 %</i><i>1.16</i></p>
<p><i>2023.06</i><i>48.25</i><i>0.25 | 1.00</i><i>76</i><i>29127.66</i><i>188.70 %</i><i>-14853.00</i><i>44563.73</i><i>0.00</i><i>0.00 %</i><i>0</i><i>0.00 %</i><i>0:01:55 | 30:19:19 | 151:34:45</i><i>81.58 %</i><i>1.19</i></p>
<p><i>2023.05</i><i>73.00</i><i>1.00 | 1.00</i><i>73</i><i>6500.73</i><i>27.33 %</i><i>-19780.00</i><i>30289.07</i><i>0.00</i><i>0.00 %</i><i>0</i><i>0.00 %</i><i>0:00:20 | 15:50:52 | 143:57:16</i><i>61.64 %</i><i>0.81</i></p>
<p><i>2023.04</i><i>59.40</i><i>0.50 | 2.00</i><i>74</i><i>9097.16</i><i>26.39 %</i><i>-4412.00</i><i>43568.34</i><i>0.00</i><i>0.00 %</i><i>0</i><i>0.00 %</i><i>0:00:41 | 5:19:47 | 48:54:03</i><i>78.38 %</i><i>0.62</i></p>
<p><i>2023.03</i><i>274.69</i><i>0.08 | 5.00</i><i>111</i><i>14287.25</i><i>58.09 %</i><i>-4474.00</i><i>38883.18</i><i>0.00</i><i>0.00 %</i><i>0</i><i>0.00 %</i><i>0:00:08 | 3:32:04 | 126:36:01</i><i>76.58 %</i><i>1.21</i></p>
<p><i>2023.02</i><i>12.00</i><i>1.00 | 1.00</i><i>12</i><i>4474.00</i><i>18.19 %</i><i>-5129.00</i><i>29069.93</i><i>0.00</i><i>0.00 %</i><i>0</i><i>0.00 %</i><i>0:06:25 | 10:52:58 | 59:02:28</i><i>100.00 %</i><i>0.00</i></p>
<p><i>2023.01</i><i>36.00</i><i>0.50 | 1.00</i><i>45</i><i>3583.86</i><i>13.71 %</i><i>-5080.00</i><i>29724.93</i><i>0.00</i><i>0.00 %</i><i>0</i><i>0.00 %</i><i>0:00:17 | 4:35:52 | 24:00:09</i><i>68.89 %</i><i>0.54</i></p>
<p><i>2022.12</i><i>61.50</i><i>0.50 | 1.00</i><i>72</i><i>9317.84</i><i>42.54 %</i><i>-1020.39</i><i>31221.07</i><i>0.00</i><i>0.00 %</i><i>0</i><i>0.00 %</i><i>0:04:45 | 4:41:35 | 93:42:10</i><i>70.83 %</i><i>0.79</i></p>
<p><i>2022.11</i><i>35.18</i><i>0.50 | 1.00</i><i>39</i><i>10185.29</i><i>79.96 %</i><i>-5295.19</i><i>22923.62</i><i>0.00</i><i>0.00 %</i><i>0</i><i>0.00 %</i><i>0:00:06 | 5:56:37 | 67:22:04</i><i>82.05 %</i><i>0.83</i></p>
<p><i>2022.10</i><i>14.67</i><i>0.86 | 1.26</i><i>14</i><i>5295.19</i><i>41.57 %</i><i>-4669.76</i><i>18033.52</i><i>0.00</i><i>0.00 %</i><i>0</i><i>0.00 %</i><i>0:06:09 | 9:45:11 | 41:39:11</i><i>100.00 %</i><i>0.00</i></p>
<p><i>2022.09</i><i>12.80</i><i>0.86 | 1.27</i><i>12</i><i>4669.76</i><i>36.66 %</i><i>-4003.57</i><i>17408.09</i><i>0.00</i><i>0.00 %</i><i>0</i><i>0.00 %</i><i>0:15:09 | 8:25:33 | 27:36:45</i><i>100.00 %</i><i>0.00</i></p>
<p><i>2022.08</i><i>11.11</i><i>0.86 | 1.20</i><i>11</i><i>4003.57</i><i>31.43 %</i><i>-4561.17</i><i>16741.90</i><i>0.00</i><i>0.00 %</i><i>0</i><i>0.00 %</i><i>0:03:16 | 4:36:32 | 17:09:15</i><i>100.00 %</i><i>0.00</i></p>
<p><i>2022.07</i><i>12.28</i><i>0.86 | 1.20</i><i>12</i><i>4561.17</i><i>35.81 %</i><i>-4302.28</i><i>17299.50</i><i>0.00</i><i>0.00 %</i><i>0</i><i>0.00 %</i><i>0:00:01 | 3:00:30 | 19:53:13</i><i>100.00 %</i><i>0.00</i></p>
<p><i>2022.06</i><i>12.16</i><i>0.86 | 1.18</i><i>12</i><i>4302.28</i><i>33.77 %</i><i>-4393.31</i><i>17040.61</i><i>0.00</i><i>0.00 %</i><i>0</i><i>0.00 %</i><i>0:08:27 | 17:12:11 | 87:39:31</i><i>100.00 %</i><i>0.00</i></p>
<p><i>2022.05</i><i>11.91</i><i>0.86 | 1.35</i><i>11</i><i>4393.31</i><i>34.49 %</i><i>-4111.31</i><i>17131.64</i><i>0.00</i><i>0.00 %</i><i>0</i><i>0.00 %</i><i>0:08:40 | 3:05:29 | 13:18:28</i><i>100.00 %</i><i>0.00</i></p>
<p><i>2022.04</i><i>11.09</i><i>0.86 | 1.23</i><i>11</i><i>4111.31</i><i>32.28 %</i><i>-5516.59</i><i>16849.64</i><i>0.00</i><i>0.00 %</i><i>0</i><i>0.00 %</i><i>0:02:15 | 4:06:41 | 17:52:13</i><i>100.00 %</i><i>0.00</i></p>
<p><i>2022.03</i><i>14.80</i><i>0.86 | 1.28</i><i>14</i><i>5516.59</i><i>43.31 %</i><i>-4456.93</i><i>18254.92</i><i>0.00</i><i>0.00 %</i><i>0</i><i>0.00 %</i><i>0:03:50 | 6:22:08 | 59:23:41</i><i>100.00 %</i><i>0.00</i></p>
<p><i>2022.02</i><i>12.31</i><i>0.86 | 1.20</i><i>12</i><i>4456.93</i><i>34.99 %</i><i class="s">0.00</i><i>17195.26</i><i>0.00</i><i>0.00 %</i><i>0</i><i>0.00 %</i><i>0:13:50 | 6:12:07 | 35:13:34</i><i>100.00 %</i><i>0.00</i></p>
<p><i>2022.01</i><i>7.67</i><i>0.86 | 1.06</i><i>8</i><i>2738.33</i><i>27.38 %</i><i class="d">&nbsp;10000.00</i><i>12738.33</i><i>0.00</i><i>0.00 %</i><i>0</i><i>0.00 %</i><i>0:18:01 | 28:24:47 | 113:39:02</i><i>100.00 %</i><i>0.00</i></p>
<p><i style="font-size:15px">&nbsp;合计</i><i>2202.95</i><i></i><i></i><i>1239603.73</i><i>1662.28 %</i><i>1191400.50</i><i></i><i class="g">&nbsp;456.3</i><i class="g">&nbsp;0.98 %</i><i class="d">322.9</i><i class="d">0.71 %</i></p>
</div>
<div class="a" style="left:766px;top:375px;font-size:23px;line-height:32px;color:#ff0">V2，四年小黄鱼，手工单</div>
<div class="a" style="left:801px;top:405px;font-size:23px;line-height:32px;color:#ff0">日5%止损风控</div>
<div class="ctrl" style="top:101px">−</div>
<svg width="1721" height="1016" viewBox="0 0 1721 1016" fill="none"><path d="M236 124l3 3h-2v4h4v-2l3 3-3 3v-2h-4v4h2l-3 3-3-3h2v-4h-4v2l-3-3 3-3v2h4v-4h-2z" fill="#a4b4c4"/><rect x="232.5" y="187.5" width="8" height="5" stroke="#b4c4d4"/><rect x="235.5" y="184.5" width="7" height="5" stroke="#b4c4d4" fill="#1b2530"/></svg>
<div class="ctrl" style="top:144px">?</div>
<div class="ctrl" style="top:162px">繫</div>
<div class="ctrl" style="top:182px;background:transparent"></div>

<div class="a" style="left:146px;top:895px;width:1575px;height:27px;background:#f0f0f0"></div>
<div class="a" style="left:146px;top:897px;width:242px;height:1px;background:#b8b8b8"></div>
<div class="a" style="left:388px;top:897px;width:1333px;height:1px;background:#111"></div>
<div class="a ctab" style="left:166px">USDCAD,H1</div>
<div class="a" style="left:269px;top:900px;width:1px;height:18px;background:#b0b0b0"></div>
<div class="a ctab" style="left:282px">XAUUSD,M5</div>
<div class="a" style="left:388px;top:897px;width:111px;height:23px;background:#fff;border:1px solid #111;border-right-width:2px;border-bottom-width:2px"></div>
<div class="a ctab" style="left:401px;color:#111">GBPUSD,H1</div>
<div class="a" style="left:0;top:921px;width:1721px;height:6px;background:#f0f0f0;border-top:1px solid #fff;box-sizing:border-box"></div>
<div class="a" style="left:0;top:927px;width:1721px;height:1px;background:#a4a4a4"></div>
<div class="a" style="left:0;top:928px;width:1721px;height:18px;background:#fff;overflow:hidden">
<div class="thb" style="left:101px"></div><div class="thb" style="left:313px"></div><div class="thb" style="left:418px"></div><div class="thb" style="left:500px"></div><div class="thb" style="left:604px"></div><div class="thb" style="left:722px"></div><div class="thb" style="left:839px"></div><div class="thb" style="left:956px"></div><div class="thb" style="left:1072px"></div><div class="thb" style="left:1189px"></div><div class="thb" style="left:1306px"></div><div class="thb" style="left:1482px"></div>
<span class="th" style="left:306px">时间</span><span class="th" style="left:411px">类型</span><span class="th" style="left:494px">手数</span><span class="th" style="left:598px">交易品种</span><span class="th" style="left:716px">价格</span><span class="th" style="left:833px">止损</span><span class="th" style="left:949px">止盈</span><span class="th" style="left:1067px">价格</span><span class="th" style="left:1184px">手续费</span><span class="th" style="left:1300px">库存费</span><span class="th" style="left:1475px">获利</span>
</div>
<div class="a" style="left:0;top:946px;width:1721px;height:70px;background:#f0f0f0"></div>
<div class="a" style="left:0;top:954px;width:1721px;height:6px;background:#878787"></div>
<div class="a" style="left:0;top:967px;width:1721px;height:1px;background:#111"></div>
<div class="a" style="left:0;top:967px;width:6px;height:24px;border-right:1px solid #111;border-bottom:1px solid #111;background:#fff"></div>
<div class="a bt" style="left:20px">展示</div><div class="bs" style="left:63px"></div>
<div class="a bt" style="left:75px">账户历史</div><div class="bs" style="left:147px"></div>
<div class="a bt" style="left:160px">新闻</div><div class="bs" style="left:202px"></div>
<div class="a bt" style="left:215px">警报</div><div class="bs" style="left:258px"></div>
<div class="a bt" style="left:270px">邮箱 <span class="red" style="position:relative;top:2px;margin-left:-2px">8</span></div><div class="bs" style="left:322px"></div>
<div class="a bt" style="left:335px">公司</div><div class="bs" style="left:377px"></div>
<div class="a bt" style="left:390px">市场 <span class="red" style="position:relative;top:2px;margin-left:-2px">143</span></div><div class="bs" style="left:456px"></div>
<div class="a bt" style="left:469px">信号</div><div class="bs" style="left:512px"></div>
<div class="a bt" style="left:524px">文章</div><div class="bs" style="left:566px"></div>
<div class="a bt" style="left:579px">代码库</div><div class="bs" style="left:637px"></div>
<div class="a bt" style="left:650px">EA</div><div class="bs" style="left:680px"></div>
<div class="a bt" style="left:694px">日志</div><div class="bs" style="left:736px"></div>
<div class="a" style="left:0;top:994px;width:1721px;height:1px;background:#fff"></div>
<div class="a" style="left:0;top:999px;width:1721px;height:1px;background:#a4a4a4"></div>
<div class="a st" style="left:-3px">请按F1键</div>
<div class="ss" style="left:876px"></div><div class="a st" style="left:882px">Default</div>
<div class="ss" style="left:1033px"></div><div class="a st" style="left:1038px">2026.03.13 00:00</div>
<div class="ss" style="left:1176px"></div><div class="a st" style="left:1182px">O: 1.26001</div>
<div class="ss" style="left:1274px"></div><div class="a" style="left:1276px;top:1000px;width:97px;height:1px;background:#d4d4d4"></div><div class="a st" style="left:1378px">L: 1.26045</div>
<div class="ss" style="left:1466px"></div><div class="a st" style="left:1472px">C: 1.26228</div>
<div class="ss" style="left:1561px"></div><div class="a st" style="left:1567px">V: 6630</div>
<div class="ss" style="left:1653px"></div>
<div class="a" style="left:1658px;top:1007px;width:30px;height:9px;background:repeating-linear-gradient(90deg,#6a8a00 0 3px,#f0f0f0 3px 4px)"></div>
<div class="a" style="left:1677px;top:1011px;width:11px;height:5px;background:repeating-linear-gradient(90deg,#1a5a7a 0 3px,#f0f0f0 3px 4px)"></div>
<div class="a st" style="left:1695px">211</div>
</body></html>
